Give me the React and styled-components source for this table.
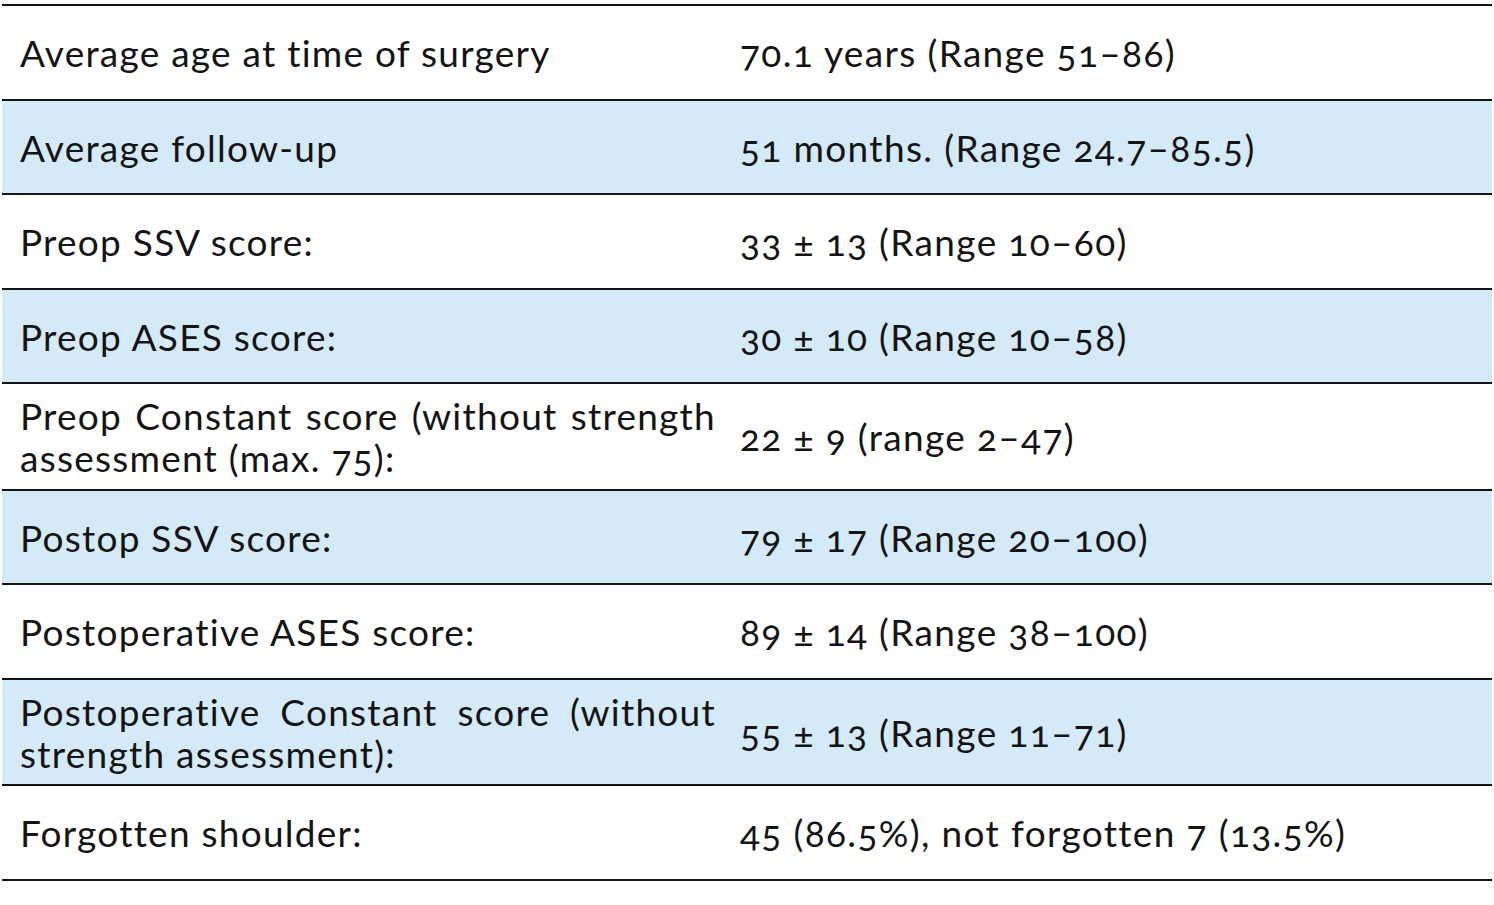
import React from "react";
import styled, { createGlobalStyle } from "styled-components";

const Global = createGlobalStyle`
  html, body { margin: 0; padding: 0; background: #ffffff; }
  body { font-family: Lato, "Open Sans", sans-serif; color: #111; }
`;

const Table = styled.div`
  margin: 4px 2px 0 2px;
  border-top: 2px solid #141414;
  width: 1490px;
`;

const Row = styled.div`
  display: grid;
  grid-template-columns: 720px 1fr;
  align-items: center;
  min-height: ${(p) => (p.$tall ? 106.5 : 94.5)}px;
  padding-top: 2px;
  background: ${(p) => (p.$shaded ? "#d4eaf9" : "#ffffff")};
  border-bottom: 2px solid #141414;
  box-sizing: border-box;
`;

const Cell = styled.div`
  padding: 0 ${(p) => (p.$label ? 6 : 14)}px 0 18px;
  font-size: 37px;
  line-height: 42px;
  letter-spacing: ${(p) => (p.$label ? 1.25 : 1.35)}px;
  font-variant-numeric: oldstyle-nums;
  font-feature-settings: "onum" 1;
  text-align: ${(p) => (p.$label ? "justify" : "left")};
  color: #141414;
`;

const rows = [
  ["Average age at time of surgery", "70.1 years (Range 51–86)"],
  ["Average follow-up", "51 months. (Range 24.7–85.5)"],
  ["Preop SSV score:", "33 ± 13 (Range 10–60)"],
  ["Preop ASES score:", "30 ± 10 (Range 10–58)"],
  ["Preop Constant score (without strength assessment (max. 75):", "22 ± 9 (range 2–47)", true],
  ["Postop SSV score:", "79 ± 17 (Range 20–100)"],
  ["Postoperative ASES score:", "89 ± 14 (Range 38–100)"],
  ["Postoperative Constant score (without strength assessment):", "55 ± 13 (Range 11–71)", true],
  ["Forgotten shoulder:", "45 (86.5%), not forgotten 7 (13.5%)"],
];

export default function App() {
  return (
    <>
      <Global />
      <Table>
        {rows.map(([a, b, tall], i) => (
          <Row key={i} $shaded={i % 2 === 1} $tall={tall}>
            <Cell $label>{a}</Cell>
            <Cell>{b}</Cell>
          </Row>
        ))}
      </Table>
    </>
  );
}
